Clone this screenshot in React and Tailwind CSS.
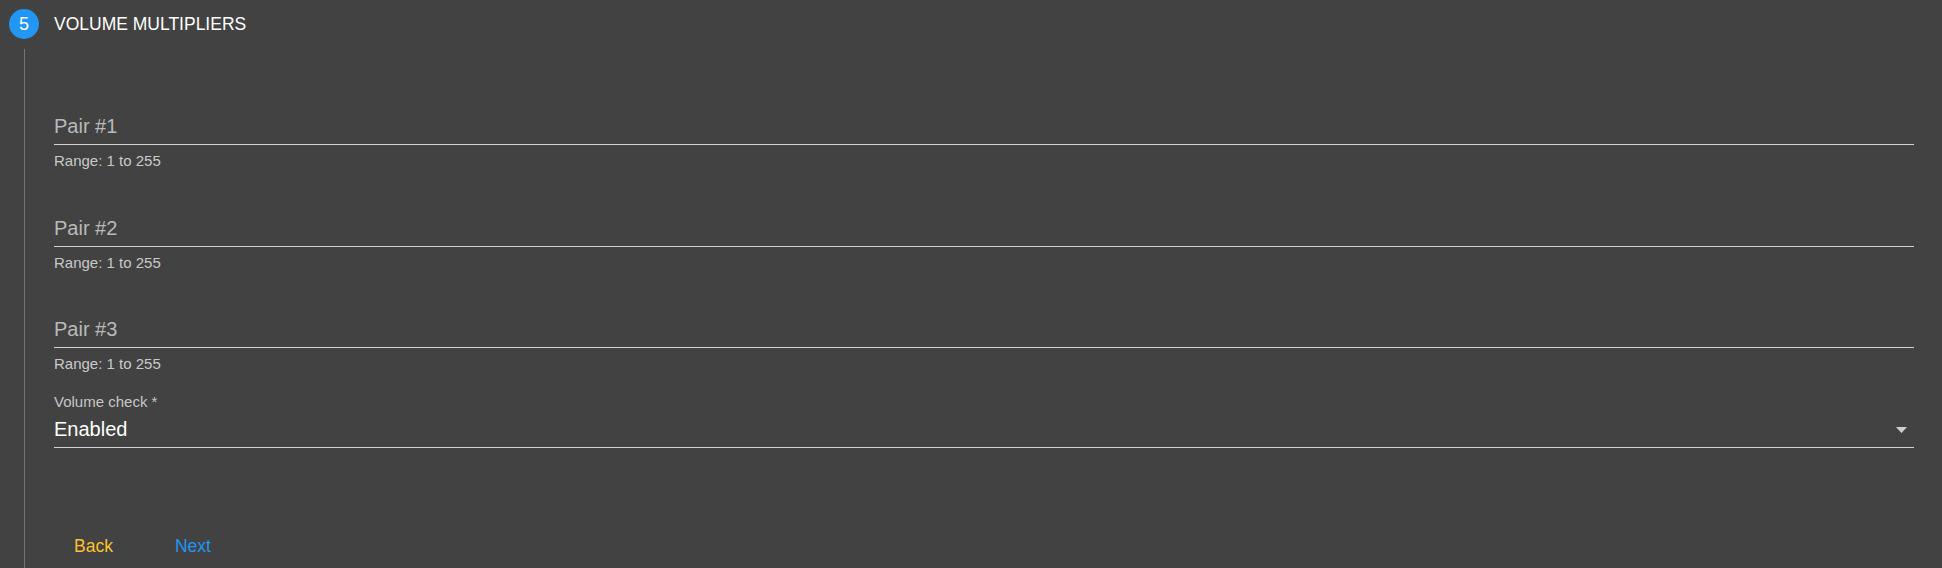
import React from 'react';

const fields = ['Pair #1', 'Pair #2', 'Pair #3'];
const fieldGaps = ['mt-[65px]', 'mt-[46px]', 'mt-[45px]'];

function PairField({ label, gap }) {
    return (
        <div className={gap}>
            <div className="h-[31px] border-b border-[#d0d0d0] text-[20px] leading-[24px] text-[#b9b9b9]">{label}</div>
            <div className="mt-[7px] text-[15px] leading-[18px] text-[#c9c9c9]">Range: 1 to 255</div>
        </div>
    );
}

export default function App() {
    return (
        <div className="w-full h-[568px] overflow-hidden bg-[#424242] flex flex-col font-['Liberation_Sans',Arial,sans-serif]">
            {/* step header */}
            <div className="flex items-center pt-[9px] pl-[9px]">
                <div className="w-[30px] h-[30px] rounded-full bg-[#2196f3] flex items-center justify-center text-white text-[18px] leading-none">5</div>
                <div className="ml-[15px] text-[17.5px] leading-[20px] text-white">VOLUME MULTIPLIERS</div>
            </div>

            {/* step content */}
            <div className="flex-1 mt-[10px] ml-[24px] border-l border-[#757575] pl-[29px] pr-[28px] flex flex-col">
                {fields.map((f, i) => (
                    <PairField key={f} label={f} gap={fieldGaps[i]} />
                ))}

                <div className="mt-[20px] text-[15px] leading-[18px] text-[#c6c6c6]">Volume check *</div>
                <div className="mt-[6px] h-[31px] border-b border-[#d0d0d0] flex justify-between">
                    <span className="text-[20px] leading-[24px] text-white">Enabled</span>
                    <svg width="11" height="6" viewBox="0 0 11 6" className="mt-[10px] mr-[7px]">
                        <polygon points="0,0 11,0 5.5,6" fill="#cfcfcf" />
                    </svg>
                </div>

                <div className="mt-[88px] flex text-[17.5px] leading-[20px]">
                    <button className="ml-[20px] text-[#fbc02d]">Back</button>
                    <button className="ml-[62px] text-[#2196f3]">Next</button>
                </div>
            </div>
        </div>
    );
}
